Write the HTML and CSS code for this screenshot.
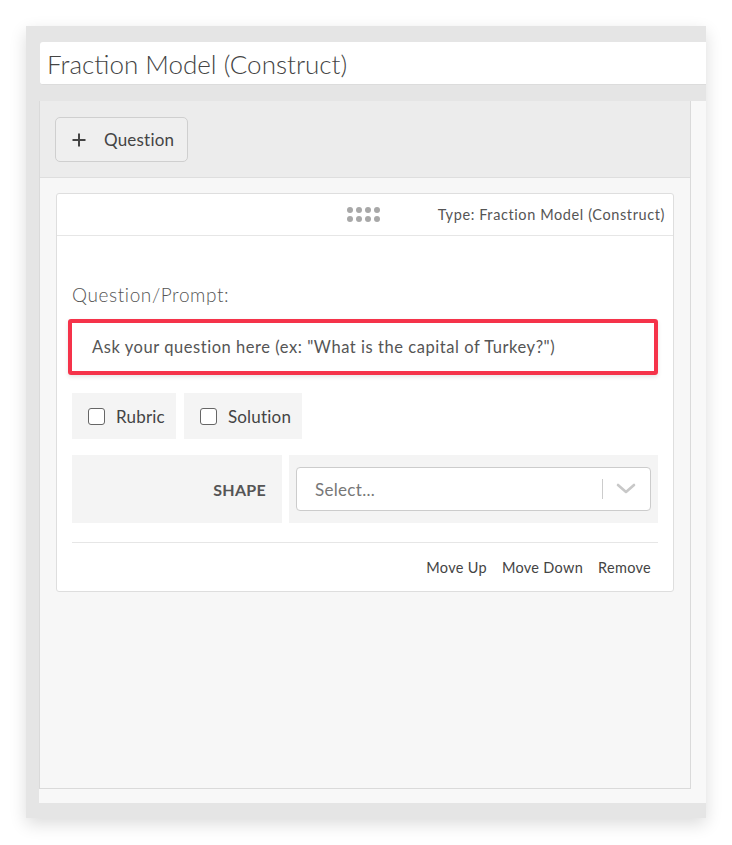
FILE: index.html
```html
<!DOCTYPE html>
<html lang="en">
<head>
    <meta charset="UTF-8">
    <meta name="viewport" content="width=device-width, initial-scale=1.0">
    <title>Fraction Model (Construct)</title>
    <link rel="stylesheet" href="styles.css">
</head>
<body>
<div class="frame">
    <!-- Название набора -->
    <div class="title-input">Fraction Model (Construct)</div>

    <div class="panel-wrap">
        <div class="panel">
            <div class="panel-head">
                <button class="add-btn">
                    <svg class="plus" width="14" height="14" viewBox="0 0 14 14">
                        <path d="M7 0.5 V13.5 M0.5 7 H13.5" stroke="#444" stroke-width="2"/>
                    </svg>
                    Question
                </button>
            </div>

            <div class="panel-body">
                <!-- Карточка вопроса -->
                <div class="card">
                    <div class="card-head">
                        <span></span>
                        <div class="drag">
                            <i></i><i></i><i></i><i></i>
                            <i></i><i></i><i></i><i></i>
                        </div>
                        <span class="type">Type: Fraction Model (Construct)</span>
                    </div>

                    <div class="card-body">
                        <div class="prompt-label">Question/Prompt:</div>
                        <div class="prompt-box">Ask your question here (ex: "What is the capital of Turkey?")</div>

                        <div class="checks">
                            <label class="check"><span class="box"></span>Rubric</label>
                            <label class="check"><span class="box"></span>Solution</label>
                        </div>

                        <div class="field-row">
                            <div class="field-name">SHAPE</div>
                            <div class="field-value">
                                <div class="select">
                                    <span class="placeholder">Select...</span>
                                    <span class="sep"></span>
                                    <svg class="chevron" width="20" height="12" viewBox="0 0 20 12">
                                        <path d="M2 2 L10 9 L18 2" fill="none" stroke="#c8c8c8" stroke-width="2.6" stroke-linecap="round" stroke-linejoin="round"/>
                                    </svg>
                                </div>
                            </div>
                        </div>

                        <div class="card-foot">
                            <a>Move Up</a>
                            <a>Move Down</a>
                            <a>Remove</a>
                        </div>
                    </div>
                </div>
            </div>
        </div>
    </div>
</div>
</body>
</html>
```

FILE: styles.css
```css
/* Общие стили */
body {
    margin: 0;
    padding: 26px;
    background: #ffffff;
    font-family: 'Lato', 'Open Sans', sans-serif;
    color: #444;
}

.frame {
    width: 680px;
    height: 792px;
    box-sizing: border-box;
    padding: 16px 0 15px 14px;
    background: #e5e5e5;
    box-shadow: 0 6px 16px rgba(0, 0, 0, 0.14);
    display: flex;
    flex-direction: column;
}

.title-input {
    height: 43px;
    box-sizing: border-box;
    padding: 6px 7px 0;
    background: #fff;
    border-bottom: 1px solid #dcdcdc;
    border-radius: 3px 0 0 3px;
    font-size: 26px;
    font-weight: 300;
    color: #444;
}

.panel-wrap {
    flex: 1;
    margin-top: 16px;
    margin-left: -1px;
    background: #f8f8f8;
    padding: 0 15px 14px 0;
    display: flex;
}

/* Панель вопросов */
.panel {
    flex: 1;
    display: flex;
    flex-direction: column;
    border: 1px solid #dadada;
    border-top: none;
    background: #f7f7f7;
}

.panel-head {
    background: #ececec;
    border-bottom: 1px solid #dedede;
    padding: 16px 15px 15px;
}

.add-btn {
    height: 45px;
    width: 133px;
    border: 1px solid #cfcfcf;
    border-radius: 5px;
    background: #efefef;
    font-family: inherit;
    font-size: 17px;
    letter-spacing: 0.2px;
    color: #444;
    display: flex;
    align-items: center;
    padding: 0 0 0 16px;
    cursor: pointer;
}

.plus {
    margin-right: 18px;
}

.panel-body {
    padding: 15px 16px;
}

/* Карточка */
.card {
    background: #fff;
    border: 1px solid #dedede;
    border-radius: 3px;
}

.card-head {
    height: 41px;
    border-bottom: 1px solid #e6e6e6;
    display: grid;
    grid-template-columns: 1fr auto 1fr;
    align-items: center;
    padding: 0 8px 0 0;
}

.drag {
    display: grid;
    grid-template-columns: repeat(4, 6px);
    gap: 2.5px 3px;
    margin-left: 4px;
}

.drag i {
    width: 6px;
    height: 6px;
    border-radius: 50%;
    background: #a8a8a8;
}

.type {
    justify-self: end;
    font-size: 14.5px;
    letter-spacing: 0.6px;
    color: #555;
}

.card-body {
    padding: 47px 15px 15px 15px;
}

.prompt-label {
    font-size: 19px;
    font-weight: 300;
    letter-spacing: 0.6px;
    color: #555;
    margin-bottom: 13px;
}

.prompt-box {
    margin-left: -4px;
    height: 56px;
    box-sizing: border-box;
    border: 4px solid #f5334a;
    border-radius: 3px;
    padding: 0 20px;
    display: flex;
    align-items: center;
    font-size: 16.5px;
    letter-spacing: 0.55px;
    color: #555;
    box-shadow: 0 2px 4px rgba(0, 0, 0, 0.1);
}

.checks {
    display: flex;
    gap: 8px;
    margin-top: 18px;
}

.check {
    height: 46px;
    display: flex;
    align-items: center;
    gap: 11px;
    padding: 0 11px 0 16px;
    background: #f4f4f4;
    font-size: 17px;
    letter-spacing: 0.2px;
    color: #444;
}

.box {
    width: 15px;
    height: 15px;
    border: 1.5px solid #666;
    border-radius: 3px;
    background: #fff;
}

.field-row {
    display: flex;
    gap: 7px;
    margin-top: 16px;
    height: 68px;
}

.field-name {
    width: 210px;
    background: #f4f4f4;
    display: flex;
    align-items: center;
    justify-content: flex-end;
    padding-right: 16px;
    box-sizing: border-box;
    font-size: 16px;
    font-weight: 700;
    letter-spacing: 0.3px;
    color: #555;
}

.field-value {
    flex: 1;
    background: #f4f4f4;
    padding: 12px 7px;
}

.select {
    height: 44px;
    box-sizing: border-box;
    background: #fff;
    border: 1px solid #cccccc;
    border-radius: 4px;
    display: flex;
    align-items: center;
    padding: 0 14px 0 18px;
}

.placeholder {
    flex: 1;
    font-size: 17px;
    letter-spacing: 0.3px;
    color: #777;
}

.sep {
    width: 1.5px;
    height: 20px;
    background: #cccccc;
    margin-right: 13px;
}

.card-foot {
    margin-top: 19px;
    border-top: 1px solid #e6e6e6;
    padding-top: 16px;
    display: flex;
    justify-content: flex-end;
    gap: 15px;
    padding-right: 7px;
    font-size: 14.5px;
    letter-spacing: 0.3px;
    color: #444;
}
```
